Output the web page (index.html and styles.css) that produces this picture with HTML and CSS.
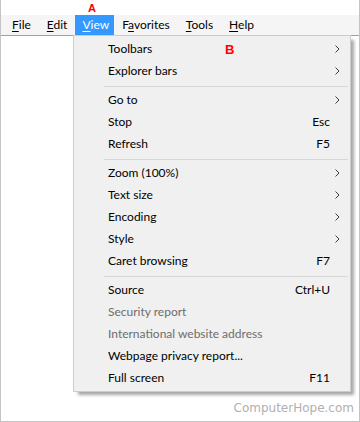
FILE: index.html
```html
<!DOCTYPE html>
<html lang="en">
<head>
<meta charset="utf-8">
<title>View menu</title>
<link rel="stylesheet" href="styles.css">
</head>
<body>
<div class="window">
  <div class="topstrip"></div>
  <nav class="menubar">
    <span class="mb-item"><u>F</u>ile</span>
    <span class="mb-item"><u>E</u>dit</span>
    <span class="mb-item active"><u>V</u>iew</span>
    <span class="mb-item">F<u>a</u>vorites</span>
    <span class="mb-item"><u>T</u>ools</span>
    <span class="mb-item"><u>H</u>elp</span>
  </nav>
  <div class="content">
    <span class="watermark">ComputerHope.com</span>
  </div>

  <div class="dropdown">
    <div class="item"><span class="label">Toolbars</span><span class="key"></span><span class="arrow"><svg width="5" height="8" viewBox="0 0 5 8"><polyline points="0.5,0.5 4,4 0.5,7.5" /></svg></span></div>
    <div class="item"><span class="label">Explorer bars</span><span class="key"></span><span class="arrow"><svg width="5" height="8" viewBox="0 0 5 8"><polyline points="0.5,0.5 4,4 0.5,7.5" /></svg></span></div>
    <div class="sep"></div>
    <div class="item"><span class="label">Go to</span><span class="key"></span><span class="arrow"><svg width="5" height="8" viewBox="0 0 5 8"><polyline points="0.5,0.5 4,4 0.5,7.5" /></svg></span></div>
    <div class="item"><span class="label">Stop</span><span class="key">Esc</span><span class="arrow"></span></div>
    <div class="item"><span class="label">Refresh</span><span class="key">F5</span><span class="arrow"></span></div>
    <div class="sep"></div>
    <div class="item"><span class="label">Zoom (100%)</span><span class="key"></span><span class="arrow"><svg width="5" height="8" viewBox="0 0 5 8"><polyline points="0.5,0.5 4,4 0.5,7.5" /></svg></span></div>
    <div class="item"><span class="label">Text size</span><span class="key"></span><span class="arrow"><svg width="5" height="8" viewBox="0 0 5 8"><polyline points="0.5,0.5 4,4 0.5,7.5" /></svg></span></div>
    <div class="item"><span class="label">Encoding</span><span class="key"></span><span class="arrow"><svg width="5" height="8" viewBox="0 0 5 8"><polyline points="0.5,0.5 4,4 0.5,7.5" /></svg></span></div>
    <div class="item"><span class="label">Style</span><span class="key"></span><span class="arrow"><svg width="5" height="8" viewBox="0 0 5 8"><polyline points="0.5,0.5 4,4 0.5,7.5" /></svg></span></div>
    <div class="item"><span class="label">Caret browsing</span><span class="key">F7</span><span class="arrow"></span></div>
    <div class="sep"></div>
    <div class="item"><span class="label">Source</span><span class="key">Ctrl+U</span><span class="arrow"></span></div>
    <div class="item disabled"><span class="label">Security report</span><span class="key"></span><span class="arrow"></span></div>
    <div class="item disabled"><span class="label">International website address</span><span class="key"></span><span class="arrow"></span></div>
    <div class="item"><span class="label">Webpage privacy report...</span><span class="key"></span><span class="arrow"></span></div>
    <div class="item"><span class="label">Full screen</span><span class="key">F11</span><span class="arrow"></span></div>
  </div>

  <span class="tag tag-a">A</span>
  <span class="tag tag-b">B</span>
</div>
</body>
</html>
```
FILE: styles.css
```css
html, body {
  margin: 0;
  padding: 0;
  background: #ffffff;
}

.window {
  position: relative;
  width: 360px;
  height: 422px;
  box-sizing: border-box;
  border: 1px solid #c4c4c4;
  border-top: none;
  display: flex;
  flex-direction: column;
  font-family: "Lato", "Noto Sans", sans-serif;
  font-size: 12px;
  color: #000;
}

.topstrip {
  height: 15px;
  background: #ffffff;
}

.menubar {
  display: flex;
  height: 20px;
  line-height: 20px;
  padding-left: 3px;
  background: #f5f5f5;
  border-bottom: 1px solid #a0a0a0;
}

.mb-item {
  padding: 0 8px;
  white-space: nowrap;
}

.mb-item u {
  text-decoration: underline;
  text-underline-offset: 2px;
  text-decoration-thickness: 1px;
}

.mb-item.active {
  padding: 0 5px 0 7px;
  background: #3399ff;
  color: #ffffff;
}

.content {
  flex: 1;
  display: flex;
  flex-direction: column;
  justify-content: flex-end;
  align-items: flex-end;
  padding: 0 5px 6px 0;
}

.watermark {
  font-family: "DejaVu Sans", sans-serif;
  font-size: 12px;
  line-height: 14px;
  color: #b0b0b0;
}

.dropdown {
  position: absolute;
  left: 72px;
  top: 35px;
  width: 278px;
  box-sizing: border-box;
  padding: 2px 0;
  background: #f0f0f0;
  border: 1px solid #cccccc;
  box-shadow: 4px 4px 3px -1px rgba(0, 0, 0, 0.35);
}

.item {
  display: grid;
  grid-template-columns: 1fr auto 20px;
  align-items: center;
  height: 22px;
  line-height: 22px;
  padding-left: 34px;
  white-space: nowrap;
}

.item.disabled {
  color: #6d6d6d;
}

.key {
  text-align: right;
}

.arrow {
  display: flex;
  align-items: center;
  height: 22px;
  padding-left: 5px;
}

.arrow svg {
  display: block;
}

.arrow polyline {
  fill: none;
  stroke: #3c3c3c;
  stroke-width: 1;
}

.sep {
  height: 1px;
  margin: 4px 2px 2px 30px;
  background: #d7d7d7;
}

.tag {
  position: absolute;
  font-family: "Liberation Sans", Arial, sans-serif;
  font-weight: bold;
  color: #ff0000;
  line-height: 1;
}

.tag-a {
  left: 87px;
  top: 3px;
  font-size: 11px;
}

.tag-b {
  left: 224px;
  top: 43px;
  font-size: 13px;
}
```
